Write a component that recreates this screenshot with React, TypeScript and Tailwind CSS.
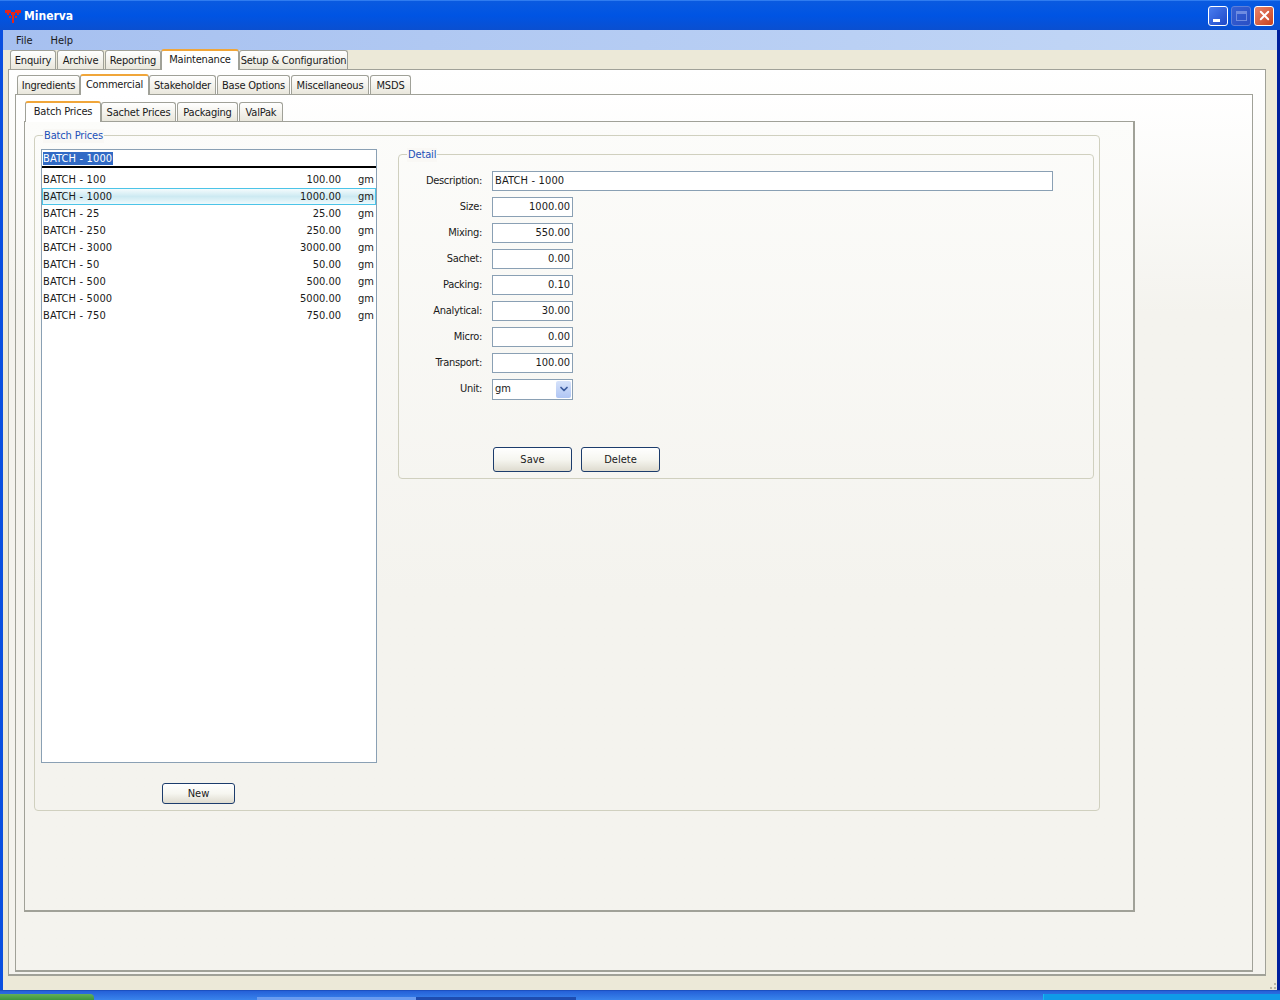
import { ChevronDown, X } from "lucide-react";

const font = "font-['DejaVu_Sans_Condensed','DejaVu_Sans',sans-serif] text-[11px] text-[#1a1a1a]";

const mainTabs = [
  { label: "Enquiry", w: "w-[46px] mr-[1px]" },
  { label: "Archive", w: "w-[47px] mr-[1px]" },
  { label: "Reporting", w: "w-[56px]" },
  { label: "Maintenance", w: "w-[78px]", active: true },
  { label: "Setup & Configuration", w: "w-[109px]" },
];

const subTabs = [
  { label: "Ingredients", w: "w-[63px]" },
  { label: "Commercial", w: "w-[69px]", active: true },
  { label: "Stakeholder", w: "w-[67px] mr-[1px]" },
  { label: "Base Options", w: "w-[73px] mr-[1px]" },
  { label: "Miscellaneous", w: "w-[78px] mr-[1px]" },
  { label: "MSDS", w: "w-[41px]" },
];

const priceTabs = [
  { label: "Batch Prices", w: "w-[76px]", active: true },
  { label: "Sachet Prices", w: "w-[75px] mr-[1px]" },
  { label: "Packaging", w: "w-[61px] mr-[1px]" },
  { label: "ValPak", w: "w-[44px]" },
];

const batches = [
  ["BATCH - 100", "100.00"],
  ["BATCH - 1000", "1000.00"],
  ["BATCH - 25", "25.00"],
  ["BATCH - 250", "250.00"],
  ["BATCH - 3000", "3000.00"],
  ["BATCH - 50", "50.00"],
  ["BATCH - 500", "500.00"],
  ["BATCH - 5000", "5000.00"],
  ["BATCH - 750", "750.00"],
];

const fields = [
  ["Size", "1000.00"],
  ["Mixing", "550.00"],
  ["Sachet", "0.00"],
  ["Packing", "0.10"],
  ["Analytical", "30.00"],
  ["Micro", "0.00"],
  ["Transport", "100.00"],
];

function TabRow({ tabs, indent }: { tabs: { label: string; w: string; active?: boolean }[]; indent: string }) {
  return (
    <div className={`flex items-end h-[19px] tracking-[-0.2px] ${indent}`}>
      {tabs.map((t) => (
        <div
          key={t.label}
          className={
            t.active
              ? `${t.w} h-[21px] -mb-px relative z-10 pb-[1px] flex items-center justify-center bg-white border-x border-[#a0a198] border-t-[2px] border-t-[#f0a63a] rounded-t-[3px] whitespace-nowrap`
              : `${t.w} h-[19px] pt-[2px] flex items-center justify-center bg-gradient-to-b from-white to-[#e9e7dc] border-x border-t border-[#a0a198] rounded-t-[3px] whitespace-nowrap`
          }
        >
          {t.label}
        </div>
      ))}
    </div>
  );
}

function Legend({ children, top }: { children: string; top: string }) {
  return (
    <span className={`absolute left-[8px] ${top} bg-[#f9f8f5] px-px leading-[14px] tracking-[-0.15px] text-[#1c50b8]`}>{children}</span>
  );
}

function WinButton({ children, tone }: { children: React.ReactNode; tone: string }) {
  return (
    <div className={`w-[20px] h-[20px] rounded-[3px] border flex items-center justify-center ${tone}`}>
      {children}
    </div>
  );
}

function PushButton({ label, w }: { label: string; w: string }) {
  return (
    <div className={`${w} pt-px flex items-center justify-center rounded-[3px] border border-[#1c3c6c] bg-gradient-to-b from-white via-[#f6f6f0] to-[#dedbcf]`}>
      {label}
    </div>
  );
}

export default function App() {
  return (
    <div className={`w-[1280px] h-[1000px] overflow-hidden flex flex-col ${font}`}>
      {/* title bar */}
      <div className="h-[30px] flex items-center pl-[4px] pr-[6px] bg-gradient-to-b from-[#0a5ae0] via-[#0054e3] to-[#0a4fd0] border-t border-[#2f7cf0]">
        <svg width="18" height="17" viewBox="0 0 18 17" className="mr-[2px] mt-[1px]">
          <path
            d="M1 2h6v2h4V2h6v3h-2v2h-2V5h-2v2h-1v8H8V7H7V5H5v2H3V5H1zM5 8h2v2H5zM11 8h2v2h-2z"
            fill="#e2261c"
          />
        </svg>
        <span className="font-bold text-[12px] text-white">Minerva</span>
        <div className="ml-auto flex gap-[3px]">
          <WinButton tone="border-white bg-gradient-to-br from-[#4a7df0] to-[#1f48c8]">
            <div className="w-[7px] h-[3px] bg-white mt-[9px] mr-[4px]" />
          </WinButton>
          <WinButton tone="border-[#5f80d8] bg-gradient-to-br from-[#3560d4] to-[#2a4fc4]">
            <div className="w-[11px] h-[10px] border border-[#6f8ce0] border-t-[3px]" />
          </WinButton>
          <WinButton tone="border-white bg-gradient-to-br from-[#e8836a] to-[#c8401a]">
            <X size={15} strokeWidth={3} className="text-white" />
          </WinButton>
        </div>
      </div>

      <div className="flex-1 border-l-[3px] border-l-[#0a4fe0] border-r-[3px] border-r-[#00209c]">
        {/* menu */}
        <div className="h-[20px] pt-[3px] flex items-center pl-[13px] gap-[18px] bg-gradient-to-r from-[#a6c0f0] to-[#c4d8f6]">
          <span>File</span>
          <span>Help</span>
        </div>

        {/* client area */}
        <div className="h-[940px] bg-[#ece9d8] pl-[5px] pr-[11px] relative">
          <TabRow tabs={mainTabs} indent="ml-[2px]" />
          <div className="h-[907px] border border-[#a0a198] border-b-[2px] bg-gradient-to-b from-white to-[#f4f3ee] to-[25%] pl-[6px] pr-[12px] pt-[5px]">
            <TabRow tabs={subTabs} indent="ml-[2px]" />
            <div className="h-[878px] border border-[#a0a198] border-b-[2px] bg-gradient-to-b from-white to-[#f4f3ee] to-[25%] pl-[8px] pt-[7px]">
              <TabRow tabs={priceTabs} indent="ml-px" />
              <div className="w-[1111px] h-[791px] border border-[#a0a198] border-r-[2px] border-b-[2px] bg-gradient-to-b from-[#fcfcfa] to-[#f4f3ee] to-[60%] pl-[9px] pt-[13px]">
                {/* batch prices group */}
                <div className="relative w-[1066px] h-[676px] border border-[#d0d0bf] rounded-[4px] pl-[6px] pt-[13px] flex gap-[21px]">
                  <Legend top="-top-[7px]">Batch Prices</Legend>
                  <div className="flex flex-col">
                    <div className="w-[336px] h-[614px] border border-[#8aa0b4] bg-white flex flex-col">
                      <div className="h-[16px] pl-[1px] flex items-center">
                        <span className="bg-[#316ac5] text-white leading-[13px] tracking-[0.15px] pr-px">BATCH - 1000</span>
                      </div>
                      <div className="h-[2px] bg-black mb-[3px]" />
                      {batches.map(([name, val], i) => (
                        <div
                          key={name}
                          className={
                            i === 1
                              ? "h-[17px] pt-px flex items-center pl-[0px] pr-[2px] border border-[#4cc4e8] bg-gradient-to-b from-[#f4fbfd] via-[#cdeaf2] to-[#eef9fc]"
                              : "h-[17px] pt-px flex items-center pl-[0px] pr-[2px] border border-transparent"
                          }
                        >
                          <span className="flex-1 tracking-[0.15px]">{name}</span>
                          <span className="w-[80px] text-right mr-[17px]">{val}</span>
                          <span className="w-[15px]">gm</span>
                        </div>
                      ))}
                    </div>
                    <div className="ml-[121px] mt-[20px] flex h-[21px]">
                      <PushButton label="New" w="w-[73px]" />
                    </div>
                  </div>

                  {/* detail group */}
                  <div className="relative w-[696px] h-[325px] mt-[5px] border border-[#d0d0bf] rounded-[4px] pt-[16px] flex flex-col gap-[6px]">
                    <Legend top="-top-[7px]">Detail</Legend>
                    <div className="flex items-center h-[20px]">
                      <span className="w-[83px] text-right mr-[10px] tracking-[-0.3px]">Description:</span>
                      <div className="w-[561px] h-[20px] border border-[#8aa0b4] bg-white pl-[2px] tracking-[0.15px] flex items-center">BATCH - 1000</div>
                    </div>
                    {fields.map(([label, val]) => (
                      <div key={label} className="flex items-center h-[20px]">
                        <span className="w-[83px] text-right mr-[10px] tracking-[-0.3px]">{label}:</span>
                        <div className="w-[81px] h-[20px] border border-[#8aa0b4] bg-white pr-[2px] flex items-center justify-end">{val}</div>
                      </div>
                    ))}
                    <div className="flex items-center h-[20px]">
                      <span className="w-[83px] text-right mr-[10px] tracking-[-0.3px]">Unit:</span>
                      <div className="w-[81px] h-[21px] border border-[#8aa0b4] bg-white pl-[2px] pr-px flex items-center justify-between">
                        gm
                        <div className="w-[15px] h-[17px] rounded-[2px] bg-gradient-to-b from-[#d6e2fa] to-[#b0c6f4] flex items-center justify-center">
                          <ChevronDown size={12} strokeWidth={3.5} className="text-[#3a5a9c]" />
                        </div>
                      </div>
                    </div>
                    <div className="flex h-[25px] mt-[42px] ml-[94px] gap-[9px]">
                      <PushButton label="Save" w="w-[79px]" />
                      <PushButton label="Delete" w="w-[79px]" />
                    </div>
                  </div>
                </div>
              </div>
            </div>
          </div>
          {/* resize grip */}
          <div className="absolute right-[1px] bottom-[1px] w-[6px] h-[6px] border-r-[2px] border-b-[2px] border-dotted border-[#b8b5a4]" />
        </div>
      </div>

      {/* taskbar edge */}
      <div className="h-[10px] flex bg-gradient-to-b from-[#2560d8] to-[#3a84ec] border-t border-[#1c50c0]">
        <div className="w-[94px] mt-[3px] rounded-tr-[4px] bg-gradient-to-b from-[#62ae58] to-[#3d963d]" />
        <div className="w-[163px]" />
        <div className="w-[159px] mt-[6px] bg-[#6a9cf0]" />
        <div className="w-[160px] mt-[6px] bg-[#1e4cb0]" />
        <div className="flex-1" />
        <div className="w-[237px] mt-[3px] bg-[#0f9ae8] border-l border-[#18b8f0]" />
      </div>
    </div>
  );
}
